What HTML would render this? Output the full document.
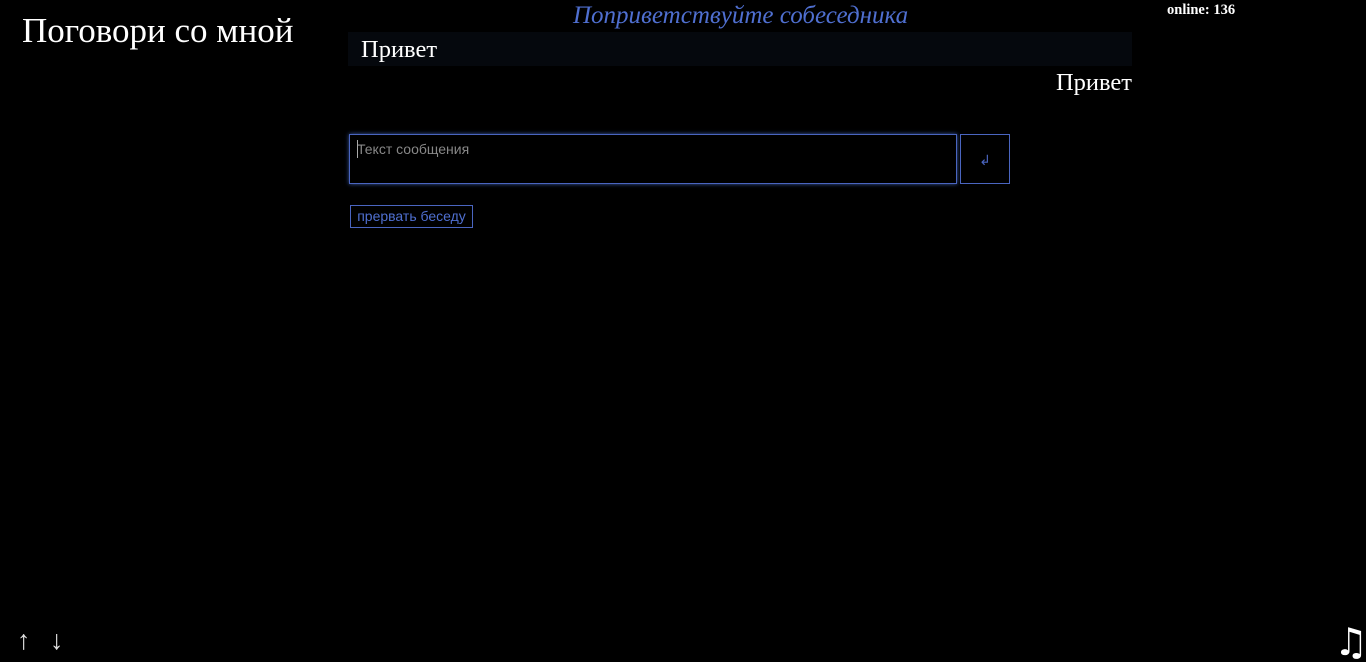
<!DOCTYPE html>
<html><head><meta charset="utf-8"><style>
html,body{margin:0;padding:0;background:#000;width:1366px;height:662px;overflow:hidden;position:relative;font-family:"Liberation Serif",serif;}
.a{position:absolute;white-space:nowrap;}
</style></head><body>
<div class="a" style="left:22px;top:11px;font-size:35px;color:#fff;">Поговори со мной</div>
<div class="a" style="left:573px;top:2px;font-size:25px;font-style:italic;color:#4f6fd0;">Поприветствуйте собеседника</div>
<div class="a" style="left:1167px;top:2px;font-size:14.5px;font-weight:bold;color:#fff;">online: 136</div>
<div class="a" style="left:348px;top:32px;width:784px;height:34px;background:#05080d;"></div>
<div class="a" style="left:361px;top:36px;font-size:24.5px;color:#fff;">Привет</div>
<div class="a" style="right:234px;top:69px;font-size:24.5px;color:#fff;">Привет</div>
<div class="a" style="left:349px;top:134px;width:606px;height:48px;border:1px solid #4a65c0;box-shadow:0 0 4px #3a5aa8;"></div>
<div class="a" style="left:357px;top:141px;font-family:'Liberation Sans',sans-serif;font-size:14px;color:#888;">Текст сообщения</div>
<div class="a" style="left:357px;top:140px;width:1px;height:18px;background:#aaa;"></div>
<div class="a" style="left:960px;top:134px;width:48px;height:48px;border:1px solid #4a65c0;color:#4a65c0;font-family:'Liberation Sans',sans-serif;font-size:14px;text-align:center;line-height:50px;">↲</div>
<div class="a" style="left:350px;top:205px;width:121px;height:21px;border:1px solid #4a65c0;color:#4f6fd0;font-family:'Liberation Sans',sans-serif;font-size:14px;text-align:center;line-height:21px;">прервать беседу</div>
<div class="a" style="left:17px;top:625px;font-size:27px;color:#ddd;">↑</div>
<div class="a" style="left:50px;top:625px;font-size:27px;color:#ddd;">↓</div>
<div class="a" style="left:1334px;top:620px;font-size:38px;color:#fff;font-family:'DejaVu Sans',sans-serif;">♫</div>
</body></html>
